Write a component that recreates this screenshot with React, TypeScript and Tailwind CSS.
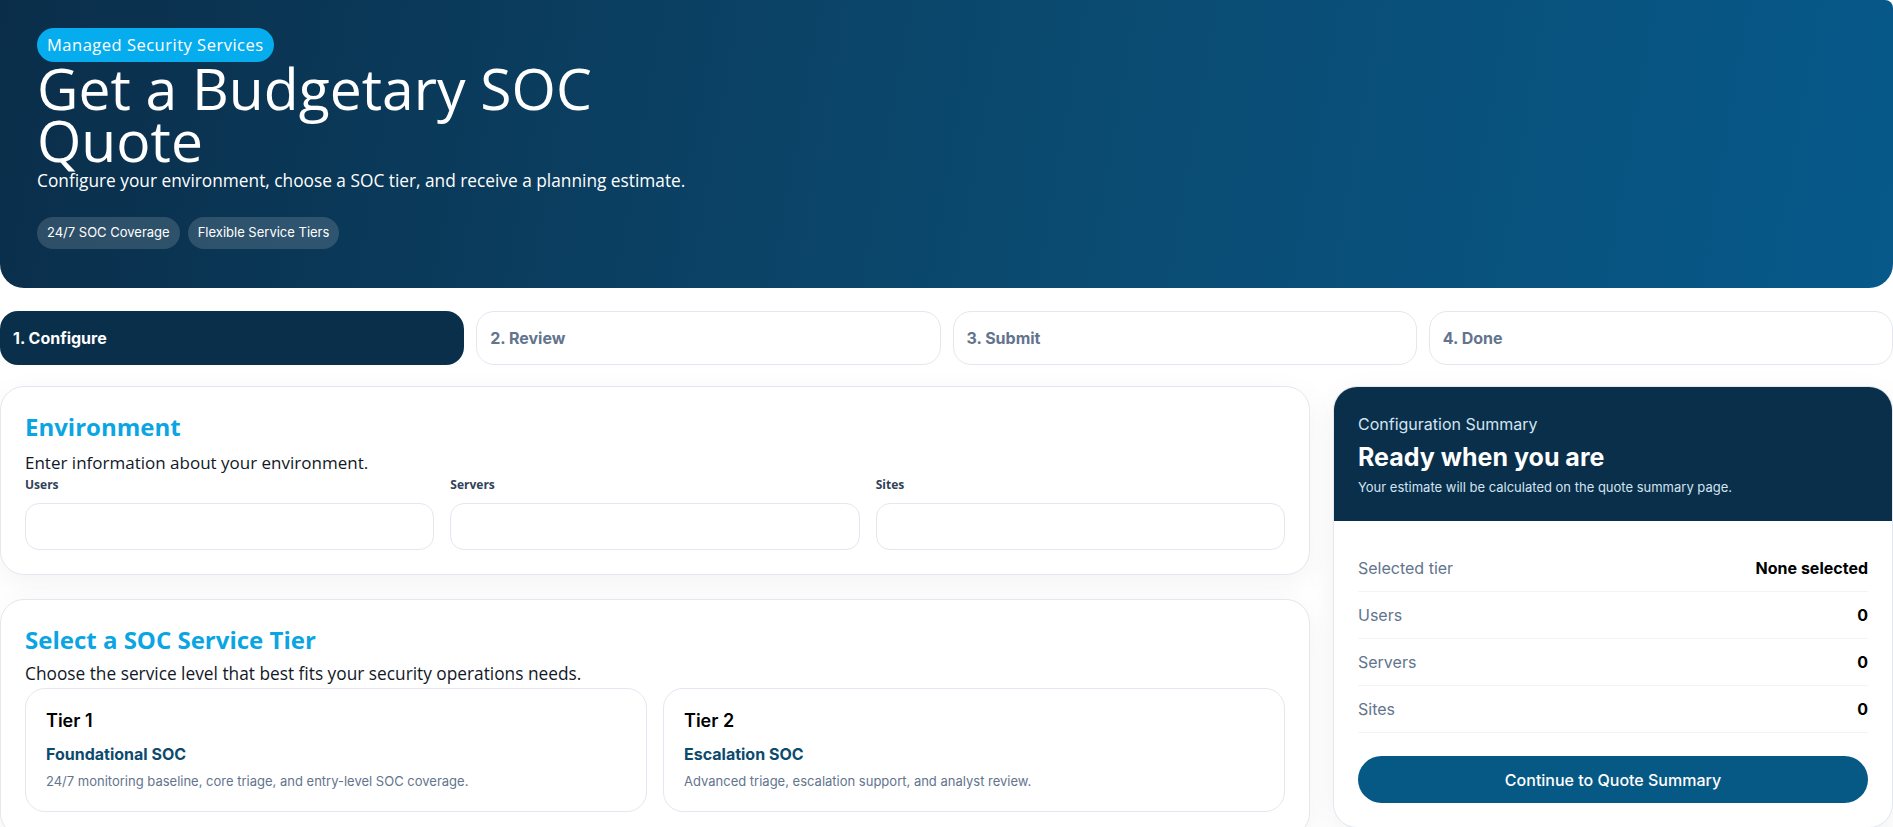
import React from "react";

const heading = { fontFamily: '"Open Sans", "Noto Sans", sans-serif' };
const body = { fontFamily: 'Inter, "Noto Sans", sans-serif' };

const steps = ["1. Configure", "2. Review", "3. Submit", "4. Done"];

const fields = ["Users", "Servers", "Sites"];

const tiers = [
  {
    tier: "Tier 1",
    name: "Foundational SOC",
    desc: "24/7 monitoring baseline, core triage, and entry-level SOC coverage.",
  },
  {
    tier: "Tier 2",
    name: "Escalation SOC",
    desc: "Advanced triage, escalation support, and analyst review.",
  },
];

const summaryRows = [
  { label: "Selected tier", value: "None selected" },
  { label: "Users", value: "0" },
  { label: "Servers", value: "0" },
  { label: "Sites", value: "0" },
];

export default function App() {
  return (
    <div className="min-h-screen w-full bg-white pb-10" style={body}>
      {/* Hero */}
      <section className="rounded-b-3xl rounded-tr-lg bg-[linear-gradient(100deg,#0a2e4a_0%,#0b4a70_55%,#06598a_100%)] pl-[37px] pr-10 pt-[28px] pb-[39px] text-white">
        <span
          className="inline-flex h-[34px] items-center rounded-full bg-[#05acee] px-[10px] text-[16.5px] leading-[22px] tracking-[0.5px] text-white"
          style={heading}
        >
          Managed Security Services
        </span>
        <h1
          className="max-w-[620px] text-[57px] font-normal leading-[52px]"
          style={heading}
        >
          Get a Budgetary SOC Quote
        </h1>
        <p className="mt-[3px] text-[17.3px] leading-6 text-white" style={heading}>
          Configure your environment, choose a SOC tier, and receive a planning estimate.
        </p>
        <div className="mt-6 flex gap-2">
          <span className="inline-flex h-[32px] items-center rounded-full bg-white/15 px-[10px] text-[13px] font-normal text-white">
            24/7 SOC Coverage
          </span>
          <span className="inline-flex h-[32px] items-center rounded-full bg-white/15 px-[10px] text-[13px] font-normal text-white">
            Flexible Service Tiers
          </span>
        </div>
      </section>

      {/* Steps */}
      <nav className="mt-[23px] grid grid-cols-4 gap-3">
        {steps.map((s, i) => (
          <div
            key={s}
            className={
              i === 0
                ? "flex h-[54px] items-center rounded-[18px] bg-[#0a2f4b] px-[13px] text-[16px] font-bold text-white"
                : "flex h-[54px] items-center rounded-[18px] border border-slate-200 bg-white px-[13px] text-[16px] font-bold text-slate-500"
            }
          >
            {s}
          </div>
        ))}
      </nav>

      {/* Main */}
      <main className="mt-[21px] grid grid-cols-[minmax(0,1fr)_560px] items-start gap-[23px]">
        <div className="flex flex-col gap-6">
          {/* Environment */}
          <section className="rounded-3xl border border-slate-200 bg-white p-6 shadow-[0_8px_30px_rgba(15,23,42,0.05)]">
            <h2 className="text-2xl font-bold leading-8 text-[#0aa5e2]" style={heading}>
              Environment
            </h2>
            <p className="mt-2 text-[17px] leading-6 text-[#111827]" style={heading}>
              Enter information about your environment.
            </p>
            <div className="mt-[2px] grid grid-cols-3 gap-4">
              {fields.map((f) => (
                <label key={f} className="flex flex-col">
                  <span className="text-[12px] font-bold leading-4 text-slate-700" style={heading}>
                    {f}
                  </span>
                  <input
                    type="text"
                    className="mt-[10px] h-[47px] rounded-[14px] border border-slate-200 bg-white px-4 text-sm outline-none"
                  />
                </label>
              ))}
            </div>
          </section>

          {/* Tiers */}
          <section className="rounded-3xl border border-slate-200 bg-white p-6 shadow-[0_8px_30px_rgba(15,23,42,0.05)]">
            <h2 className="text-2xl font-bold leading-8 text-[#0aa5e2]" style={heading}>
              Select a SOC Service Tier
            </h2>
            <p className="mt-[6px] text-[17.3px] leading-6 text-[#111827]" style={heading}>
              Choose the service level that best fits your security operations needs.
            </p>
            <div className="mt-[2px] grid grid-cols-2 gap-4">
              {tiers.map((t) => (
                <div
                  key={t.tier}
                  className="rounded-[20px] border border-slate-200 bg-white px-5 pt-[18px] pb-5"
                >
                  <div className="text-[18px] font-semibold leading-7 text-black">{t.tier}</div>
                  <div className="mt-2 text-[16px] font-bold leading-[22px] text-[#0c4a6e]">
                    {t.name}
                  </div>
                  <div className="mt-1.5 text-[13px] leading-5 text-slate-500">{t.desc}</div>
                </div>
              ))}
            </div>
          </section>
        </div>

        {/* Summary */}
        <aside className="overflow-hidden rounded-3xl border border-slate-200 bg-white shadow-[0_8px_30px_rgba(15,23,42,0.06)]">
          <div className="bg-[#0a2f4b] px-6 pt-[26px] pb-[25px]">
            <div className="text-[16px] leading-[22px] text-[#d3e4f1]">Configuration Summary</div>
            <div className="mt-[6px] text-[25px] font-bold leading-8 text-white">Ready when you are</div>
            <div className="mt-[6px] text-[13px] leading-[17px] text-[#d3e4f1]">
              Your estimate will be calculated on the quote summary page.
            </div>
          </div>
          <div className="px-6 pt-6 pb-6">
            {summaryRows.map((r) => (
              <div
                key={r.label}
                className="flex items-center justify-between border-b border-slate-100 py-3 text-[16px] leading-[22px]"
              >
                <span className="text-slate-500">{r.label}</span>
                <span className="font-bold text-black">{r.value}</span>
              </div>
            ))}
            <button
              type="button"
              className="mt-[23px] w-full rounded-full bg-[#075985] py-[12.5px] text-[16px] font-medium leading-[22px] text-white"
            >
              Continue to Quote Summary
            </button>
          </div>
        </aside>
      </main>
    </div>
  );
}
